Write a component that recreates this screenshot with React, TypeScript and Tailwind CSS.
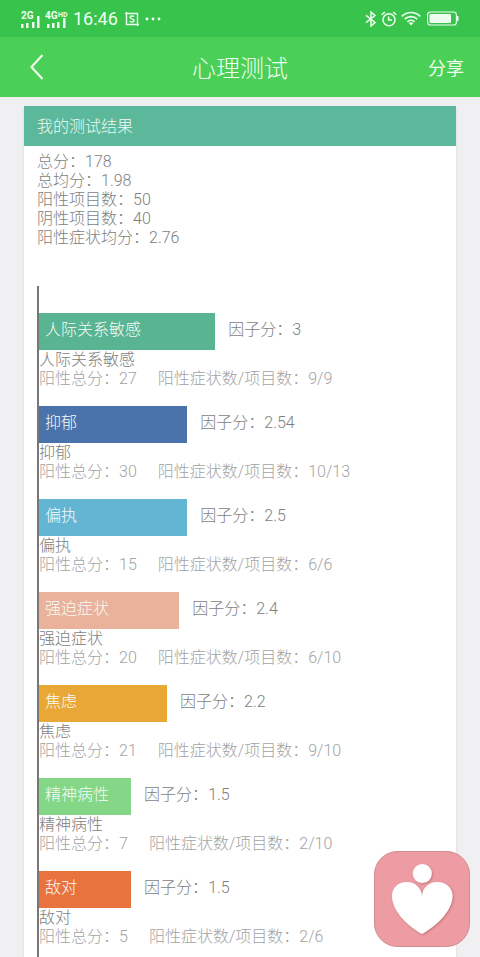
const factors = [
  { name: "人际关系敏感", score: "3", total: 27, ratio: "9/9", width: 43.6, color: "bg-[#58b491]" },
  { name: "抑郁", score: "2.54", total: 30, ratio: "10/13", width: 36.7, color: "bg-[#4a73ab]" },
  { name: "偏执", score: "2.5", total: 15, ratio: "6/6", width: 36.7, color: "bg-[#62b5d3]" },
  { name: "强迫症状", score: "2.4", total: 20, ratio: "6/10", width: 34.7, color: "bg-[#eab29b]" },
  { name: "焦虑", score: "2.2", total: 21, ratio: "9/10", width: 31.7, color: "bg-[#e9a835]" },
  { name: "精神病性", score: "1.5", total: 7, ratio: "2/10", width: 22.8, color: "bg-[#83d786]" },
  { name: "敌对", score: "1.5", total: 5, ratio: "2/6", width: 22.8, color: "bg-[#e9733e]" },
];

const summary = [
  ["总分", "178"],
  ["总均分", "1.98"],
  ["阳性项目数", "50"],
  ["阴性项目数", "40"],
  ["阳性症状均分", "2.76"],
];

function Signal({ label, sup }: { label: string; sup?: string }) {
  return (
    <svg width={sup ? 24 : 20} height="18" viewBox={sup ? "0 0 24 18" : "0 0 20 18"} fill="currentColor">
      <text x="0" y="9" fontSize="10" fontWeight="700">{label}</text>
      {sup && <text x="13" y="7" fontSize="7" fontWeight="700">{sup}</text>}
      <rect x={sup ? 2 : 0} y="14" width="2.500" height="4" />
      <rect x={sup ? 7 : 5} y="13" width="2.500" height="5" />
      <rect x={sup ? 12 : 11} y="12" width="2.500" height="6" />
      <rect x={sup ? 18 : 16} y={sup ? 8 : 6} width="2.500" height={sup ? 10 : 12} />
    </svg>
  );
}

function StatusBar() {
  return (
    <div className="flex h-[37px] items-center justify-between bg-[#38c44c] px-[21px] text-[#effcf0]">
      <div className="flex items-center">
        <Signal label="2G" />
        <span className="w-1" />
        <Signal label="4G" sup="HD" />
        <span className="ml-1 pt-px text-lg font-normal leading-6">16:46</span>
        <svg className="ml-[7px]" width="14" height="14" viewBox="0 0 14 14" fill="none" stroke="currentColor">
          <path d="M0 1.5H12.5V14M1.5 0V12.5H14" strokeWidth="1.4" />
          <path d="M9 4.8C8.5 3.8 5 3.6 5 5.3C5 7.2 9.2 6.5 9.2 8.6C9.2 10.5 5.4 10.3 4.8 9" strokeWidth="1.4" />
        </svg>
        <svg className="ml-[6px]" width="16" height="4" viewBox="0 0 16 4" fill="currentColor">
          <circle cx="2" cy="2" r="1.4" />
          <circle cx="8" cy="2" r="1.4" />
          <circle cx="14" cy="2" r="1.4" />
        </svg>
      </div>
      <div className="flex items-center gap-1">
        <svg width="12" height="16" viewBox="0 0 12 16" fill="none" stroke="currentColor" strokeWidth="1.5">
          <path d="M1 4.3L10 11.5L6 15V1L10 4.5L1 11.7" />
        </svg>
        <svg width="16" height="16" viewBox="0 0 16 16" fill="none" stroke="currentColor" strokeWidth="1.5">
          <circle cx="8" cy="8.7" r="6" />
          <path d="M7.6 5.5V9H11M0.8 3.8L3.8 1M15.2 3.8L12.2 1" />
        </svg>
        <svg width="20" height="15" viewBox="0 0 20 15" fill="none" stroke="currentColor" strokeWidth="1.7">
          <path d="M0.8 5.4C6 0.2 14 0.2 19.2 5.4M3.7 8.2C7.3 4.7 12.7 4.7 16.3 8.2M6.4 10.9C8.5 8.9 11.5 8.9 13.6 10.9" />
          <path d="M7.6 12.1C9 11 11 11 12.4 12.1L10 14.4Z" fill="currentColor" stroke="none" />
        </svg>
        <svg className="ml-[2px]" width="32" height="15" viewBox="0 0 32 15" fill="none" stroke="currentColor">
          <rect x="0.6" y="1" width="28.8" height="13" rx="2.8" strokeWidth="1.1" />
          <rect x="2.5" y="3" width="21.5" height="9" rx="1" fill="currentColor" stroke="none" />
          <path d="M30.7 5V10" strokeWidth="1.6" />
        </svg>
      </div>
    </div>
  );
}

export default function App() {
  return (
    <div className="flex min-h-screen flex-col bg-[#f0f0f3] font-['Roboto','Noto_Sans_CJK_SC',sans-serif] font-light">
      <StatusBar />
      <header className="grid h-[60px] grid-cols-[1fr_auto_1fr] items-center bg-[#4bd057] px-4 text-[#effcf0]">
        <button aria-label="返回" className="ml-[14px] justify-self-start">
          <svg width="14" height="26" viewBox="0 0 14 26" fill="none" stroke="currentColor" strokeWidth="2.2">
            <path d="M12.5 1L1.5 13L12.5 25" />
          </svg>
        </button>
        <h1 className="pt-1 text-2xl leading-8">心理测试</h1>
        <button className="justify-self-end pt-1 text-lg font-normal">分享</button>
      </header>

      <main className="mx-6 mt-[9px] flex-1 bg-white text-base leading-[19px] text-[#7e7e7e] shadow">
        <h2 className="flex h-10 items-center bg-[#5cb89a] px-[13px] text-[#effaf5]">我的测试结果</h2>
        <div className="px-[13px] pt-[6px]">
          {summary.map(([label, value]) => (
            <p key={label}>{label}：{value}</p>
          ))}
        </div>

        <div className="mx-[13px] mt-[39px] border-l-2 border-[#777777] pt-[27px]">
          {factors.map((f) => (
            <section key={f.name} className="pb-[18px]">
              <div className="flex h-[37px]">
                <div className={`flex items-center pb-1 pl-[6px] text-[#f6fbf8] ${f.color}`} style={{ width: `${f.width}%` }}>
                  {f.name}
                </div>
                <p className="flex items-center pb-1 pl-[13px]">因子分：{f.score}</p>
              </div>
              <h3>{f.name}</h3>
              <p className="flex gap-[21px] text-[#a3a3a3]">
                <span>阳性总分：{f.total}</span>
                <span>阳性症状数/项目数：{f.ratio}</span>
              </p>
            </section>
          ))}
        </div>
      </main>

      <button aria-label="心理测试首页" className="fixed bottom-[10px] right-[10px]">
        <svg width="96" height="96" viewBox="0 0 96 96">
          <defs>
            <filter id="soft" x="-20%" y="-20%" width="140%" height="140%">
              <feDropShadow dx="1" dy="1" stdDeviation="1" floodColor="#a85c64" floodOpacity="0.6" />
            </filter>
          </defs>
          <rect x="0.5" y="0.5" width="95" height="95" rx="23" fill="#ec9ca2" stroke="#d08a90" />
          <g fill="#fff" filter="url(#soft)">
            <circle cx="48.300" cy="22.500" r="9.500" />
            <path d="M48 46C48 37 41 31 33 31C24 31 18 37 18 45C18 59 32 74 48 83C64 74 78.500 59 78.500 45C78.500 37 72 31 63 31C55 31 48 37 48 46Z" />
          </g>
        </svg>
      </button>
    </div>
  );
}
